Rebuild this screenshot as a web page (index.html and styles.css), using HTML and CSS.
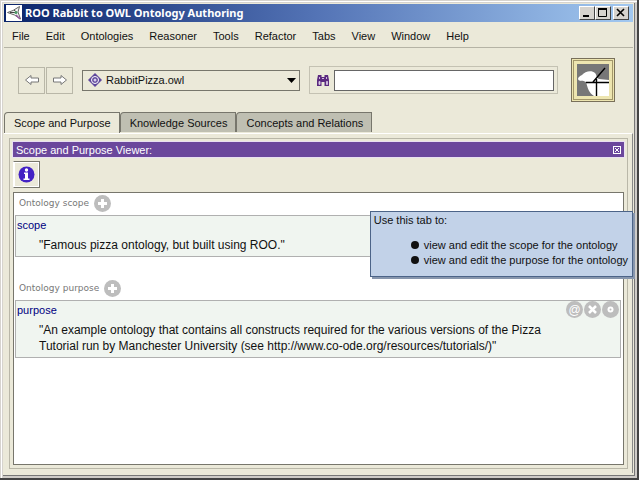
FILE: index.html
```html
<!DOCTYPE html>
<html lang="en">
<head>
    <meta charset="UTF-8">
    <meta name="viewport" content="width=device-width, initial-scale=1.0">
    <title>ROO Rabbit to OWL Ontology Authoring</title>
    <link rel="stylesheet" href="styles.css">
</head>
<body>

<div class="window">
    <header class="titlebar">
        <svg class="app-icon" width="16" height="16" viewBox="0 0 16 16">
            <rect width="16" height="16" fill="#fff"/>
            <path d="M1.500 7.500L7 5.500L13.500 1.500L12 7L14.500 14L8.500 10Z" fill="#f2f2f2" stroke="#666"/>
            <path d="M4 7.500h7L8 5" fill="none" stroke="#444"/>
            <path d="M10 10l4 4" stroke="#93579c" stroke-width="1.500"/>
            <circle cx="10" cy="7.500" r="1.500" fill="#4c9a68"/>
        </svg>
        <h1>ROO Rabbit to OWL Ontology Authoring</h1>
        <button class="win-btn" aria-label="Minimize"><svg width="12" height="10" viewBox="0 0 12 10"><path d="M2 8h6" stroke="#000" stroke-width="2"/></svg></button>
        <button class="win-btn" aria-label="Maximize"><svg width="12" height="10" viewBox="0 0 12 10"><path d="M1.500 1v7.500h8V1" fill="none" stroke="#000"/><path d="M1 1h9" stroke="#000" stroke-width="2"/></svg></button>
        <button class="win-btn close" aria-label="Close"><svg width="12" height="10" viewBox="0 0 12 10"><path d="M2 1l7 7M9 1L2 8" stroke="#000" stroke-width="1.600"/></svg></button>
    </header>

    <nav class="menubar">
        <button>File</button>
        <button>Edit</button>
        <button>Ontologies</button>
        <button>Reasoner</button>
        <button>Tools</button>
        <button>Refactor</button>
        <button>Tabs</button>
        <button>View</button>
        <button>Window</button>
        <button>Help</button>
    </nav>

    <div class="toolbar">
        <div class="history">
            <button aria-label="Back"><svg width="16" height="12" viewBox="0 0 16 12"><path d="M1.500 6L7 1.500V4h7.500v4H7v2.500Z" fill="#fff" stroke="#777"/></svg></button>
            <button aria-label="Forward"><svg width="16" height="12" viewBox="0 0 16 12"><path d="M14.500 6L9 1.500V4H1.500v4H9v2.500Z" fill="#fff" stroke="#777"/></svg></button>
        </div>
        <div class="ontology">
            <svg width="14" height="14" viewBox="0 0 14 14">
                <path d="M7 0l7 7-7 7-7-7Z" fill="#5f479c"/>
                <circle cx="7" cy="7" r="3.500" fill="#5f479c" stroke="#fff"/>
                <circle cx="7" cy="7" r="1.500" fill="#d8cfee"/>
            </svg>
            <select aria-label="Active ontology">
                <option>RabbitPizza.owl</option>
            </select>
            <svg class="arrow" width="9" height="5" viewBox="0 0 9 5"><path d="M0 0h9L4.500 5Z" fill="#000"/></svg>
        </div>
        <div class="search">
            <label for="find">
                <svg width="14" height="13" viewBox="0 0 14 13">
                    <path d="M2 1h3.500v2h3V1H12l1 5v6H8.500V8h-3v4H1V6Z" fill="#5b2a80"/>
                    <path d="M6 4.500h2M3 7.500h1v3H3ZM10.500 7.500h1v3h-1ZM3.500 3v2M10.500 3v2" fill="#fff" stroke="#cdb8dc"/>
                </svg>
            </label>
            <input type="text" id="find" aria-label="Find">
        </div>
        <button class="logo" aria-label="About">
            <svg width="32" height="32" viewBox="0 0 32 32">
                <rect width="32" height="32" fill="#777"/>
                <path d="M1 15C1 13 3 12 5 11C8 7 15 6 18 9C20 11 19 14 22 15L32 16V32H17C12 29 11 25 9 18C6 16 2 18 1 15Z" fill="#fff"/>
                <path d="M28 4L16 18M9 18.500H32M19.500 15V32" fill="none" stroke="#000" stroke-width="1.400"/>
            </svg>
        </button>
    </div>

    <div class="tabs" role="tablist">
        <button class="tab active" role="tab" aria-selected="true">Scope and Purpose</button>
        <button class="tab" role="tab">Knowledge Sources</button>
        <button class="tab" role="tab">Concepts and Relations</button>
    </div>

    <main class="pane">
        <div class="viewer">
            <div class="viewer-title">
                <h2>Scope and Purpose Viewer:</h2>
                <button aria-label="Close view"><svg width="8" height="8" viewBox="0 0 8 8"><rect x="0.500" y="0.500" width="7" height="7" fill="none" stroke="#fff"/><path d="M2 2l4 4M6 2L2 6" stroke="#fff"/></svg></button>
            </div>
            <button class="info" aria-label="Information">
                <svg width="17" height="17" viewBox="0 0 17 17">
                    <circle cx="8.500" cy="8.500" r="8" fill="#4322c4"/>
                    <circle cx="8.500" cy="4" r="1.700" fill="#fff"/>
                    <path d="M6 6.500h4v6h1.500V14h-6v-1.500H7V8H6Z" fill="#fff"/>
                </svg>
            </button>

            <div class="annotations">
                <div class="section-title">
                    <span>Ontology scope</span>
                    <button class="round" aria-label="Add scope"><svg width="17" height="17" viewBox="0 0 17 17"><circle cx="8.500" cy="8.500" r="8.500" fill="#bdbdbd"/><path d="M8.500 4v9M4 8.500h9" stroke="#fff" stroke-width="3"/></svg></button>
                </div>
                <div class="annotation">
                    <h3>scope</h3>
                    <p>"Famous pizza ontology, but built using ROO."</p>
                </div>

                <div class="section-title">
                    <span>Ontology purpose</span>
                    <button class="round" aria-label="Add purpose"><svg width="17" height="17" viewBox="0 0 17 17"><circle cx="8.500" cy="8.500" r="8.500" fill="#bdbdbd"/><path d="M8.500 4v9M4 8.500h9" stroke="#fff" stroke-width="3"/></svg></button>
                </div>
                <div class="annotation">
                    <div class="actions">
                        <button class="round at" aria-label="Annotate">@</button>
                        <button class="round" aria-label="Delete"><svg width="17" height="17" viewBox="0 0 17 17"><circle cx="8.500" cy="8.500" r="8.500" fill="#bdbdbd"/><path d="M5 5l7 7M12 5l-7 7" stroke="#fff" stroke-width="2.500"/></svg></button>
                        <button class="round" aria-label="Edit"><svg width="17" height="17" viewBox="0 0 17 17"><circle cx="8.500" cy="8.500" r="8.500" fill="#bdbdbd"/><circle cx="8.500" cy="8.500" r="3" fill="#fff"/><circle cx="8.500" cy="8.500" r="1" fill="#bdbdbd"/></svg></button>
                    </div>
                    <h3>purpose</h3>
                    <p>"An example ontology that contains all constructs required for the various versions of the Pizza Tutorial run by Manchester University (see http://www.co-ode.org/resources/tutorials/)"</p>
                </div>
            </div>
        </div>
    </main>

    <div class="tooltip" role="tooltip">
        Use this tab to:
        <ul>
            <li>view and edit the scope for the ontology</li>
            <li>view and edit the purpose for the ontology</li>
        </ul>
    </div>
</div>

</body>
</html>
```
FILE: styles.css
```css
* {
    box-sizing: border-box;
}
body {
    margin: 0;
    font-family: "Liberation Sans", Arial, sans-serif;
    font-size: 11px;
    color: #111;
    background-color: #ebe9d9;
}
button, input, select {
    font: inherit;
    color: inherit;
    background: none;
    border: 0;
    padding: 0;
    margin: 0;
}
svg {
    display: block;
    flex: none;
}
h1, h2, h3, p {
    margin: 0;
    font-weight: normal;
}

.window {
    position: relative;
    display: flex;
    flex-direction: column;
    min-height: 100vh;
    padding: 4px 4px 5px 4px;
    border-right: 2px solid #444;
    border-bottom: 2px solid #444;
    background-color: #ebe9d9;
    box-shadow: inset 1px 1px #d6d3ce, inset 2px 2px #fff, inset 3px 3px #d6d3ce, inset -2px -2px #cfccc8, inset -3px -3px #777;
}

.titlebar {
    display: flex;
    align-items: center;
    height: 18px;
    padding: 0 4px 0 2px;
    background: linear-gradient(to right, #0a246a, #5474b6 50%, #a2c8f0);
}
.titlebar h1 {
    flex: 1;
    padding-left: 3px;
    font: bold 11px "Noto Sans", sans-serif;
    line-height: 18px;
    color: #fff;
}
.win-btn {
    width: 16px;
    height: 14px;
    padding: 1px;
    background-color: #d6d3ce;
    border: 1px solid;
    border-color: #fff #444 #444 #fff;
}
.win-btn.close {
    margin-left: 2px;
}

.menubar {
    display: flex;
    gap: 16px;
    height: 26px;
    padding: 2px 8px 0;
    border-bottom: 1px solid #b5b3a5;
}

.toolbar {
    display: flex;
    align-items: center;
    height: 64px;
    padding: 0 18px 0 14px;
}
.history {
    display: flex;
    gap: 1px;
}
.history button {
    display: flex;
    align-items: center;
    justify-content: center;
    width: 27px;
    height: 27px;
    border: 1px solid #b9b7a8;
}
.ontology {
    display: flex;
    align-items: center;
    flex: 218;
    height: 21px;
    margin-left: 9px;
    padding: 0 3px 0 5px;
    border: 1px solid #77766c;
}
.ontology select {
    flex: 1;
    min-width: 0;
    padding-left: 4px;
    appearance: none;
}
.search {
    display: flex;
    align-items: center;
    flex: 250;
    height: 28px;
    margin: 0 13px 0 9px;
    padding: 0 3px 0 6px;
    border: 1px solid #c4c2b3;
}
.search input {
    flex: 1;
    min-width: 0;
    height: 21px;
    margin-left: 4px;
    padding: 0 3px;
    background-color: #fff;
    border: 1px solid #666;
}
.logo {
    padding: 5px;
    background-color: #ede5b0;
    border: 1px solid #79705a;
    outline: 1px solid #a3976a;
    outline-offset: -3px;
}

.tabs {
    display: flex;
    height: 21px;
}
.tab {
    height: 20px;
    padding: 0 8px 0 9px;
    border: 1px solid #77766c;
    border-bottom: 0;
    border-top-left-radius: 4px;
    background-color: #bfbfb2;
}
.tab.active {
    height: 21px;
    background-color: #ebe9d9;
}

.pane {
    display: flex;
    flex: 1;
    padding: 4px 4px 4px 5px;
    border-top: 1px solid #fff;
    border-right: 1px solid #888;
}
.viewer {
    display: flex;
    flex-direction: column;
    flex: 1;
    padding: 3px;
    border: 1px solid #b9b7a8;
}
.viewer-title {
    display: flex;
    align-items: center;
    height: 15px;
    padding: 0 3px;
    background-color: #6b479c;
    color: #fff;
    outline: 1px solid #e9e0f2;
}
.viewer-title h2 {
    flex: 1;
    font-size: 11px;
}
.info {
    display: flex;
    align-items: center;
    justify-content: center;
    width: 27px;
    height: 27px;
    margin: 4px 0;
    border: 1px solid #77766c;
    border-left-color: #fff;
    outline: 1px solid #fff;
    outline-offset: -2px;
}

.annotations {
    flex: 1;
    padding: 2px 2px 2px 1px;
    background-color: #fff;
    border: 1px solid #77766c;
}
.section-title {
    display: flex;
    align-items: center;
    gap: 5px;
    height: 20px;
    padding: 0 0 4px 4px;
    font-family: "DejaVu Sans", Verdana, sans-serif;
    font-size: 9px;
    color: #777;
}
.round {
    width: 17px;
    height: 17px;
}
.round.at {
    border-radius: 50%;
    background-color: #bdbdbd;
    color: #fff;
    font-size: 12px;
    line-height: 16px;
}
.annotation {
    margin-bottom: 23px;
    padding: 1px 60px 3px 1px;
    position: relative;
    background-color: #f0f5f0;
    border: 1px solid #b0b0b0;
}
.annotation h3 {
    font-size: 11px;
    line-height: 16px;
    color: #000080;
}
.annotation p {
    padding: 4px 0 0 22px;
    font-size: 12px;
    line-height: 16px;
    color: #111;
}
.actions {
    position: absolute;
    top: 0;
    right: 1px;
    display: flex;
    gap: 1px;
}

.tooltip {
    position: absolute;
    top: 211px;
    right: 4px;
    padding: 1px 4px 8px 3px;
    line-height: 15px;
    background-color: #c2d2e8;
    border: 1px solid #4c6488;
    box-shadow: 2px 2px #8796ad;
}
.tooltip ul {
    margin: 10px 0 0;
    padding-left: 50px;
    list-style: none;
}
.tooltip li::before {
    content: "";
    display: inline-block;
    width: 8px;
    height: 8px;
    margin: 0 5px 0 -13px;
    border-radius: 50%;
    background-color: #111;
}
```
